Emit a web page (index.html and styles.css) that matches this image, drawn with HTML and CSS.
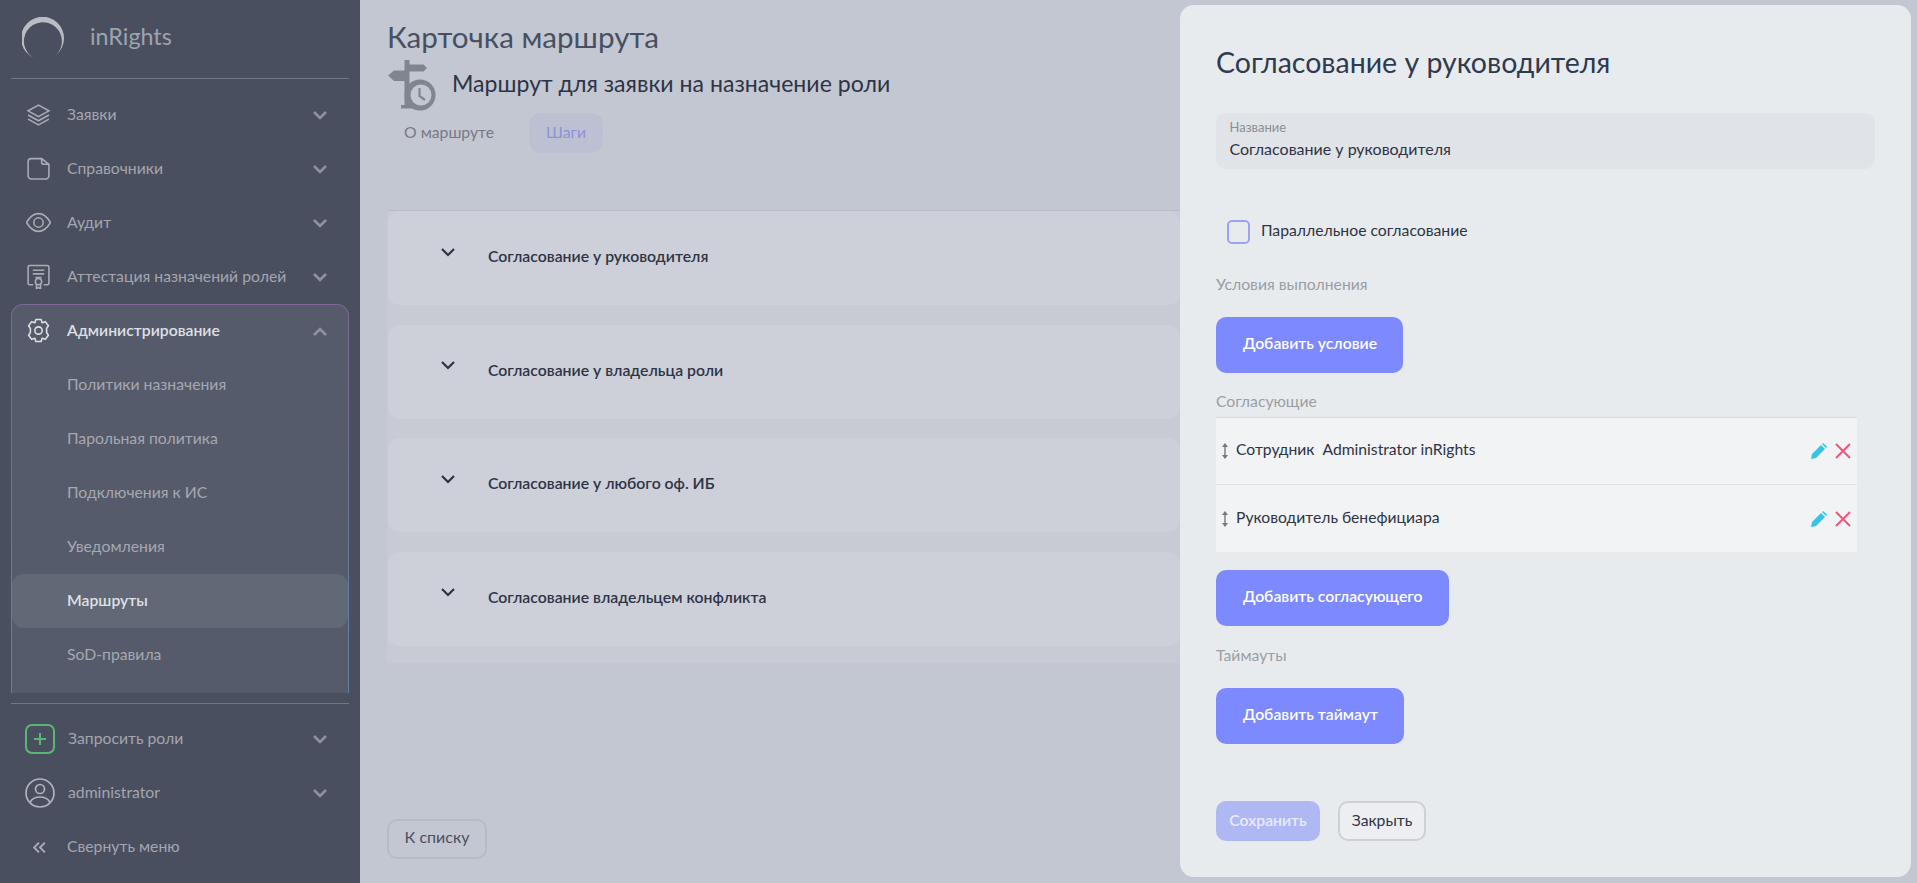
FILE: index.html
```html
<!DOCTYPE html>
<html lang="ru">
<head>
<meta charset="utf-8">
<title>Карточка маршрута</title>
<link rel="stylesheet" href="styles.css">
</head>
<body>
<div class="app">
  <aside class="sidebar">
    <div class="brand">
      <svg class="logo" viewBox="0 0 44 44"><path d="M12 41A21.500 21.500 0 1 1 34 38A19 19 0 1 0 12 41Z" fill="#b9bcc3"/></svg>
      <span class="brand-name">inRights</span>
    </div>
    <nav class="nav-top">
      <a class="nav-row">
        <svg class="nav-ico" viewBox="0 0 24 24"><path d="M12 3 22 8.500 12 14 2 8.500Z M2 12.500 12 18 22 12.500 M2 16.500 12 22 22 16.500"/></svg>
        <span class="nav-label">Заявки</span>
        <svg class="chev" viewBox="0 0 16 10"><path d="M2 2 8 8 14 2"/></svg>
      </a>
      <a class="nav-row">
        <svg class="nav-ico" viewBox="0 0 24 24"><path d="M5 2.500H15L22 8V19C22 20.500 20.500 22 19 22H5C3.500 22 2 20.500 2 19V5.500C2 3.500 3.500 2.500 5 2.500Z M15 2.500V6C15 7.500 16 8 17 8H22"/></svg>
        <span class="nav-label">Справочники</span>
        <svg class="chev" viewBox="0 0 16 10"><path d="M2 2 8 8 14 2"/></svg>
      </a>
      <a class="nav-row">
        <svg class="nav-ico" viewBox="0 0 24 24"><path d="M0.500 12C4 6 8 3.500 12 3.500S20 6 23.500 12C20 18 16 20.500 12 20.500S4 18 0.500 12Z"/><circle cx="12" cy="12" r="4.500"/></svg>
        <span class="nav-label">Аудит</span>
        <svg class="chev" viewBox="0 0 16 10"><path d="M2 2 8 8 14 2"/></svg>
      </a>
      <a class="nav-row">
        <svg class="nav-ico" viewBox="0 0 24 24"><path d="M7 20H3.500C2.500 20 2 19.500 2 18.500V3C2 2 2.500 1.500 3.500 1.500H20.500C21.500 1.500 22 2 22 3V18.500C22 19.500 21.500 20 20.500 20H17 M6.500 6H17.500 M6.500 9.500H17.500 M9 13H15"/><circle cx="12" cy="17" r="3"/><path d="M10 20V24L12 22.500 14 24V20"/></svg>
        <span class="nav-label">Аттестация назначений ролей</span>
        <svg class="chev" viewBox="0 0 16 10"><path d="M2 2 8 8 14 2"/></svg>
      </a>
      <div class="nav-group">
        <a class="nav-row nav-row-open">
          <svg class="nav-ico" viewBox="0 0 24 24"><path d="M9.500 1.500H14.500L15.500 4.500 18.500 3.500 21.500 7.500 19.800 10 19.800 14 21.500 16.500 18.500 20.500 15.500 19.500 14.500 22.500H9.500L8.500 19.500 5.500 20.500 2.500 16.500 4.200 14V10L2.500 7.500 5.500 3.500 8.500 4.500Z" stroke-linejoin="round"/><circle cx="12" cy="12" r="3.500"/></svg>
          <span class="nav-label">Администрирование</span>
          <svg class="chev" viewBox="0 0 16 10"><path d="M2 8 8 2 14 8"/></svg>
        </a>
        <a class="sub-row">Политики назначения</a>
        <a class="sub-row">Парольная политика</a>
        <a class="sub-row">Подключения к ИС</a>
        <a class="sub-row">Уведомления</a>
        <a class="sub-row sub-active">Маршруты</a>
        <a class="sub-row">SoD-правила</a>
      </div>
    </nav>
    <div class="nav-bottom">
      <a class="nav-row">
        <svg class="nav-ico-lg add-ico" viewBox="0 0 30 30"><rect x="1" y="1" width="28" height="28" rx="6"/><path d="M15 9V21M9 15H21"/></svg>
        <span class="nav-label">Запросить роли</span>
        <svg class="chev" viewBox="0 0 16 10"><path d="M2 2 8 8 14 2"/></svg>
      </a>
      <a class="nav-row">
        <svg class="nav-ico-lg" viewBox="0 0 30 30"><circle cx="15" cy="15" r="14"/><circle cx="15" cy="11" r="4.500"/><path d="M5 24.500C7 20.500 11 19 15 19S23 20.500 25 24.500"/></svg>
        <span class="nav-label">administrator</span>
        <svg class="chev" viewBox="0 0 16 10"><path d="M2 2 8 8 14 2"/></svg>
      </a>
      <a class="nav-row">
        <svg class="collapse-ico" viewBox="0 0 12 12"><path d="M5.500 1.500 1 6 5.500 10.500M11 1.500 6.500 6 11 10.500"/></svg>
        <span class="nav-label">Свернуть меню</span>
      </a>
    </div>
  </aside>

  <main class="main">
    <h1 class="page-title">Карточка маршрута</h1>
    <div class="route-head">
      <svg class="route-ico" viewBox="0 0 48 51"><path d="M16.500 0h5v4.500h14l3.500 3.500-3.500 3.500h-14V21h-5v-0H6L0 15.500 6 10.500h10.500zM16.500 20h5v25h3v3.500H13V45h3.500z" fill="#80858f"/><circle cx="32" cy="35" r="15.500" fill="#80858f"/><circle cx="33" cy="35" r="10.500" fill="#c3c7d1"/><path d="M31.500 28V36L37 40" fill="none" stroke="#80858f" stroke-width="2.200"/></svg>
      <h2 class="route-name">Маршрут для заявки на назначение роли</h2>
    </div>
    <div class="tabs">
      <span class="tab">О маршруте</span>
      <span class="tab tab-active">Шаги</span>
    </div>
    <div class="steps">
      <div class="step"><svg class="step-chev" viewBox="0 0 16 10"><path d="M2 2 8 8 14 2"/></svg><span class="step-name">Согласование у руководителя</span></div>
      <div class="step"><svg class="step-chev" viewBox="0 0 16 10"><path d="M2 2 8 8 14 2"/></svg><span class="step-name">Согласование у владельца роли</span></div>
      <div class="step"><svg class="step-chev" viewBox="0 0 16 10"><path d="M2 2 8 8 14 2"/></svg><span class="step-name">Согласование у любого оф. ИБ</span></div>
      <div class="step"><svg class="step-chev" viewBox="0 0 16 10"><path d="M2 2 8 8 14 2"/></svg><span class="step-name">Согласование владельцем конфликта</span></div>
    </div>
    <button class="btn-back">К списку</button>
  </main>

  <section class="panel">
    <h2 class="panel-title">Согласование у руководителя</h2>
    <div class="field">
      <span class="field-label">Название</span>
      <span class="field-value">Согласование у руководителя</span>
    </div>
    <label class="check"><span class="check-box"></span><span class="check-text">Параллельное согласование</span></label>
    <div class="section-label label-cond">Условия выполнения</div>
    <button class="btn-primary">Добавить условие</button>
    <div class="section-label label-appr">Согласующие</div>
    <div class="approvers">
      <div class="approver">
        <svg class="drag" viewBox="0 0 8 16"><path d="M4 2V14" stroke="#777" stroke-width="1.400"/><path d="M4 0 7 4H1ZM4 16 1 12H7Z" fill="#777"/></svg>
        <span class="approver-name">Сотрудник&nbsp; Administrator inRights</span>
        <svg class="edit" viewBox="0 0 16 16"><path d="M0 16 1 11 10 2 14 6 5 15Z M11 1 12 0 16 3.500 15 5Z" fill="#38c3e4"/></svg>
        <svg class="del" viewBox="0 0 16 16"><path d="M1 1 15 15M15 1 1 15"/></svg>
      </div>
      <div class="approver">
        <svg class="drag" viewBox="0 0 8 16"><path d="M4 2V14" stroke="#777" stroke-width="1.400"/><path d="M4 0 7 4H1ZM4 16 1 12H7Z" fill="#777"/></svg>
        <span class="approver-name">Руководитель бенефициара</span>
        <svg class="edit" viewBox="0 0 16 16"><path d="M0 16 1 11 10 2 14 6 5 15Z M11 1 12 0 16 3.500 15 5Z" fill="#38c3e4"/></svg>
        <svg class="del" viewBox="0 0 16 16"><path d="M1 1 15 15M15 1 1 15"/></svg>
      </div>
    </div>
    <button class="btn-primary btn-add-appr">Добавить согласующего</button>
    <div class="section-label label-time">Таймауты</div>
    <button class="btn-primary">Добавить таймаут</button>
    <div class="panel-actions">
      <button class="btn-save">Сохранить</button>
      <button class="btn-close">Закрыть</button>
    </div>
  </section>
</div>
</body>
</html>
```
FILE: styles.css
```css
* { box-sizing: border-box; }
html, body { margin: 0; height: 100%; overflow: hidden; }
body { font-family: Lato, "Noto Sans", "Liberation Sans", sans-serif; background: #c3c7d1; }
.app { display: flex; height: 883px; position: relative; }
button { font-family: inherit; cursor: pointer; }

.sidebar { width: 360px; flex: none; background: #4a4f60; display: flex; flex-direction: column; padding: 0 11px; }
.brand { height: 79px; flex: none; display: flex; align-items: center; gap: 24px; padding: 0 11px; border-bottom: 1px solid #71768a; }
.logo { width: 44px; height: 44px; margin-top: 0; }
.brand-name { font-size: 23.300px; color: #9da4ae; padding-bottom: 6px; }
.nav-top { height: 614px; margin-bottom: 10px; flex: none; overflow: hidden; padding-top: 9px; }
.nav-row { height: 54px; display: flex; align-items: center; color: #a3a6ae; font-size: 15.750px; padding-left: 13px; }
.nav-label { flex: 1; padding-left: 14px; padding-bottom: 4px; }
.nav-ico { width: 25px; height: 25px; flex: none; fill: none; stroke: #a9acb4; stroke-width: 1.500; margin: -2px 2px 0 2px; }
.nav-ico-lg { width: 30px; height: 30px; flex: none; fill: none; stroke: #b0b3ba; stroke-width: 1.700; margin: 0 -1px 0 1px; }
.add-ico { stroke: #58b773; stroke-width: 2; }
.collapse-ico { width: 13px; height: 13px; flex: none; fill: none; stroke: #a9acb4; stroke-width: 1.800; margin-left: 9px; margin-right: 7px; }
.chev { width: 16px; height: 10px; flex: none; fill: none; stroke: #8f929c; stroke-width: 2.600; margin-right: 21px; }
.nav-group { margin-top: 0; height: 480px; border: 1px solid transparent; border-bottom: 0; border-radius: 12px 12px 0 0; background: linear-gradient(#565b6b, #565b6b) padding-box, linear-gradient(180deg, #7d6796, #64809f 70%) border-box; }
.nav-row-open { color: #dfe0e4; font-weight: 600; height: 53px; padding-left: 12px; }
.nav-row-open .nav-ico { stroke: #dfe0e4; }
.nav-row-open .chev { margin-right: 20px; }
.sub-row { display: flex; align-items: center; height: 54px; padding: 0 0 4px 55px; font-size: 15.750px; color: #a5a8b0; }
.sub-active { background: #636876; border-radius: 12px; color: #dfe0e4; font-weight: 600; }
.nav-bottom { border-top: 1px solid #71768a; flex: none; padding-top: 8px; }

.main { flex: 1; padding: 19px 0 0 27px; display: flex; flex-direction: column; }
.page-title { margin: 0; font-size: 29.600px; line-height: 36px; font-weight: 400; color: #475063; }
.route-head { display: flex; align-items: center; height: 52px; margin-top: 5px; }
.route-ico { width: 48px; height: 51px; flex: none; margin: 0 0 1px 1px; }
.route-name { margin: 0 0 0 16px; padding-bottom: 7px; font-size: 23.100px; font-weight: 400; color: #2e3445; }
.tabs { display: flex; gap: 0; height: 40px; margin-top: 1px; }
.tab { display: flex; align-items: center; padding: 0 17px 4px; margin-right: 18px; font-size: 15.750px; color: #767a85; border-radius: 12px; }
.tab-active { background: #bcc0d2; color: #8d94d6; padding: 0 17px 4px; }
.steps { margin-top: 57px; width: 793px; background: #c8cbd4; border-top: 1px solid #b9bdc8; height: 453px; display: flex; flex-direction: column; gap: 19.500px; }
.step { height: 94px; flex: none; background: #cdd0d9; border-radius: 12px; margin-left: 1px; display: flex; align-items: center; padding-left: 52px; padding-top: 1px; }
.step-chev { width: 16px; height: 10px; fill: none; stroke: #2e3445; stroke-width: 2.200; margin-right: 32px; margin-bottom: 14px; }
.step-name { font-size: 15.800px; font-weight: 600; color: #2e3445; padding-bottom: 6px; }
.btn-back { margin-top: 156px; width: 100px; height: 40px; padding: 0 0 5px; background: transparent; border: 2px solid #b7bbc6; border-radius: 10px; font-size: 16px; color: #4a5060; align-self: flex-start; }

.panel { position: absolute; left: 1180px; top: 5px; width: 731px; height: 872px; background: #e8ebee; border-radius: 14px; padding: 41px 36px 0; display: flex; flex-direction: column; align-items: flex-start; }
.panel-title { margin: 0; font-size: 28.500px; line-height: 32px; font-weight: 400; color: #2e3a50; }
.field { width: 659px; height: 56px; margin-top: 35px; background: #e0e3e7; border-radius: 10px; padding: 6px 13.500px; display: flex; flex-direction: column; }
.field-label { font-size: 13px; line-height: 16px; color: #8a8e96; }
.field-value { font-size: 16px; line-height: 24px; margin-top: 2px; color: #2e3445; }
.check { display: flex; align-items: center; gap: 11px; margin: 51px 0 0 11px; font-size: 15.750px; color: #2e3445; height: 24px; }
.check-box { width: 23px; height: 24px; border: 2px solid #9ca4f0; border-radius: 5px; }
.check-text { padding-bottom: 6px; }
.section-label { font-size: 15.750px; line-height: 20px; color: #9a9ea6; }
.label-cond { margin-top: 30px; }
.btn-primary { width: auto; height: 56px; padding: 0 26px 5px 27px; border: 0; border-radius: 10px; background: #7c89ff; color: #fff; font-size: 15.750px; font-weight: 600; margin-top: 23px; }
.label-appr { margin-top: 18px; }
.approvers { width: 641px; margin-top: 6px; border-top: 1px solid #d8dce2; }
.approver { height: 67px; background: #f1f3f5; display: flex; align-items: center; padding: 0 6px 0 5px; border-bottom: 1px solid #dfe2e6; font-size: 15.700px; color: #2e3445; }
.approver:last-child { border-bottom: 0; }
.approver:last-child .approver-name { margin-top: -3px; }
.drag { width: 8px; height: 16px; flex: none; margin-right: 7px; }
.approver-name { flex: 1; margin-top: -5px; }
.edit { width: 16px; height: 16px; flex: none; margin-right: 8px; }
.del { width: 16px; height: 16px; flex: none; fill: none; stroke: #f0557a; stroke-width: 2; }
.btn-add-appr { margin-top: 18px; }
.label-time { margin-top: 19px; }
.panel-actions { display: flex; gap: 18px; margin-top: 57px; }
.btn-save { width: 104px; height: 40px; padding: 0 0 4px; border: 0; border-radius: 10px; background: #b0b8f4; color: #e8ebff; font-size: 15.750px; font-weight: 600; }
.btn-close { width: 88px; height: 40px; padding: 0 0 4px; border: 2px solid #cdd0d4; border-radius: 10px; background: #eceef1; color: #2e3445; font-size: 15.750px; }
```
